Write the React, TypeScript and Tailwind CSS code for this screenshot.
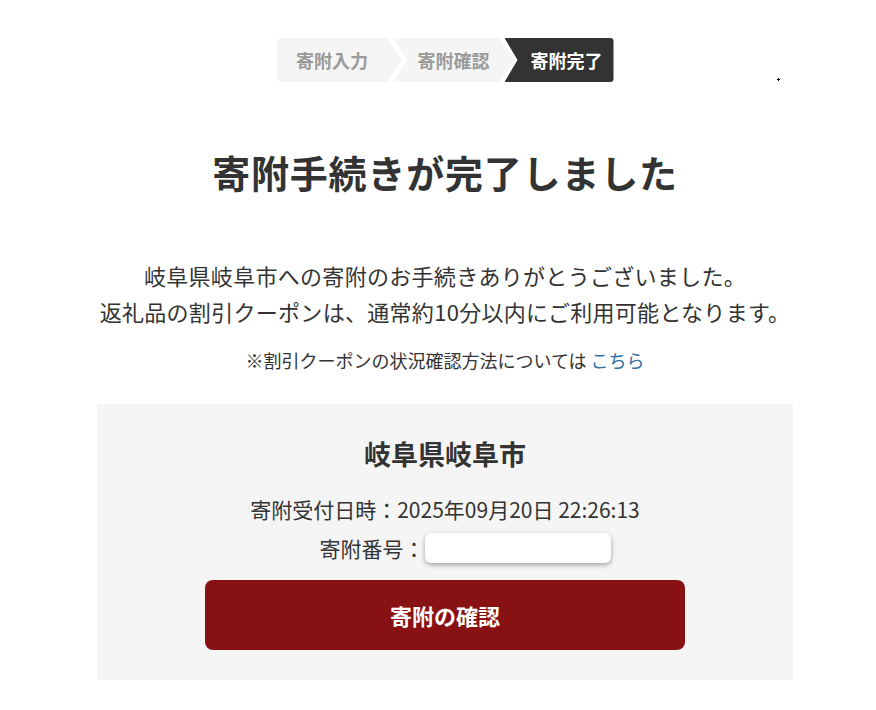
export default function App() {
  return (
    <div
      className="relative min-h-[710px] bg-white text-[#333] pl-[14px]"
      style={{ fontFamily: '"Noto Sans CJK JP", "Noto Sans", sans-serif' }}
    >
      {/* ステップ表示 */}
      <div className="flex justify-center pt-[38px]">
        <div className="flex h-[44px] text-[18px] font-bold">
          <div className="flex w-[126px] items-center justify-center rounded-l-[4px] bg-[#f5f5f5] pr-[15px] text-[#9a9a9a] [clip-path:polygon(0_0,calc(100%-15px)_0,100%_50%,calc(100%-15px)_100%,0_100%)]">
            寄附入力
          </div>
          <div className="-ml-[10px] flex w-[122px] items-center justify-center bg-[#f5f5f5] px-[15px] text-[#9a9a9a] [clip-path:polygon(0_0,calc(100%-15px)_0,100%_50%,calc(100%-15px)_100%,0_100%,15px_50%)]">
            寄附確認
          </div>
          <div className="-ml-[10px] flex w-[109px] items-center justify-center rounded-r-[4px] bg-[#333] pl-[15px] text-white [clip-path:polygon(0_0,100%_0,100%_100%,0_100%,13px_50%)]">
            寄附完了
          </div>
        </div>
      </div>

      <span className="absolute left-[777px] top-[78px] h-[3px] w-[3px] bg-black [clip-path:polygon(33%_0,66%_0,66%_33%,100%_33%,100%_66%,66%_66%,66%_100%,33%_100%,33%_66%,0_66%,0_33%,33%_33%)]" />

      {/* 見出し */}
      <h1 className="mt-[61px] text-center text-[38px] font-bold leading-[57px] tracking-[0.8px]">
        寄附手続きが完了しました
      </h1>

      <p className="mt-[57px] text-center text-[22px] leading-[36px] tracking-[0.3px]">
        岐阜県岐阜市への寄附のお手続きありがとうございました。
        <br />
        返礼品の割引クーポンは、通常約10分以内にご利用可能となります。
      </p>

      <p className="mt-[18px] text-center text-[18px] leading-[26px]">
        ※割引クーポンの状況確認方法については <a className="text-[#2f6fa7]">こちら</a>
      </p>

      {/* 寄附情報 */}
      <div className="mx-auto mt-[31px] w-[696px] bg-[#f5f5f5] px-[108px] pb-[30px] pt-[30px]">
        <h2 className="text-center text-[27px] font-bold leading-[40px]">岐阜県岐阜市</h2>
        <div className="mt-[20px] text-center text-[21px] leading-[30px]">
          寄附受付日時：2025年09月20日 22:26:13
        </div>
        <div className="mt-[9px] flex items-center justify-center pl-[40px] text-[21px] leading-[30px]">
          <span>寄附番号：</span>
          <span className="h-[30px] w-[186px] rounded-[6px] bg-white shadow-[0_2px_5px_rgba(0,0,0,0.35)]" />
        </div>
        <button className="mt-[17px] flex h-[70px] w-[480px] items-center justify-center rounded-[8px] bg-[#881213] text-[22px] font-bold text-white">
          寄附の確認
        </button>
      </div>
    </div>
  );
}
